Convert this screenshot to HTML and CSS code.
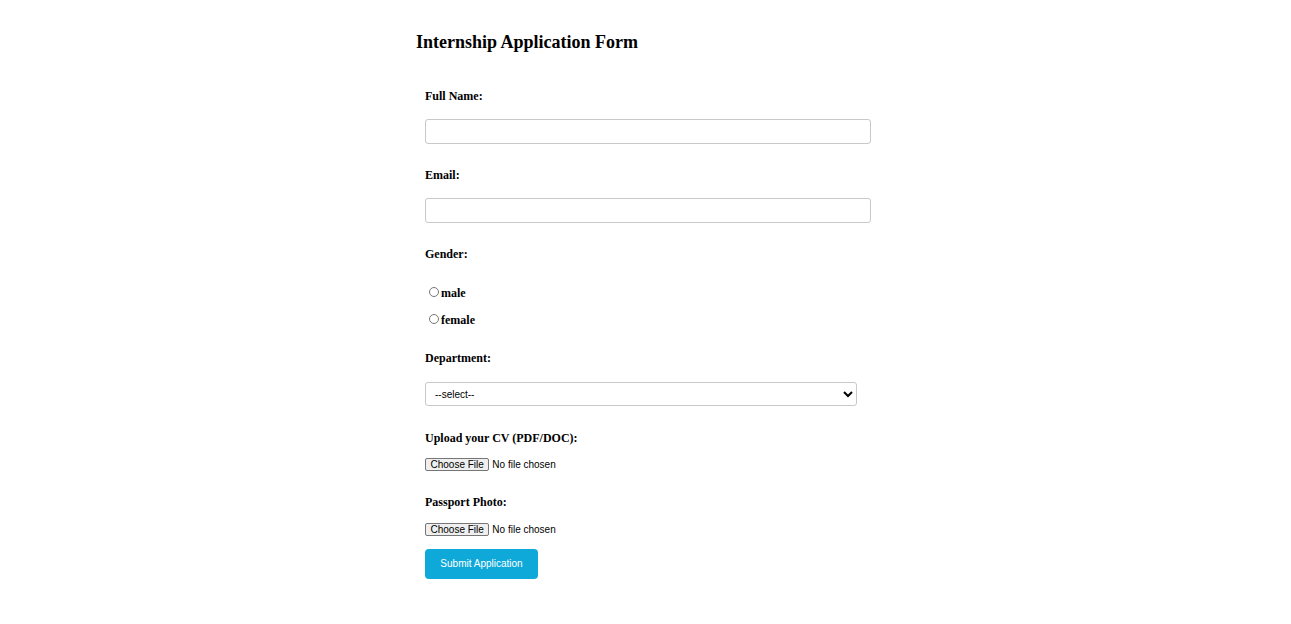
FILE: index.html
```html
<!DOCTYPE html>
<html lang="en">
<head>
<meta charset="utf-8">
<title>Internship Application Form</title>
<link rel="stylesheet" href="styles.css">
</head>
<body>
<div class="container">
  <h2 class="title">Internship Application Form</h2>
  <form class="form">
    <label class="label label-first" for="fullname">Full Name:</label>
    <input class="text-input" type="text" id="fullname">

    <label class="label" for="email">Email:</label>
    <input class="text-input" type="email" id="email">

    <span class="label">Gender:</span>
    <div class="radio-row radio-row-first">
      <input class="radio" type="radio" name="gender" id="male"><label class="radio-label" for="male">male</label>
    </div>
    <div class="radio-row">
      <input class="radio" type="radio" name="gender" id="female"><label class="radio-label" for="female">female</label>
    </div>

    <label class="label label-after-radio" for="dept">Department:</label>
    <select class="select" id="dept">
      <option>--select--</option>
      <option>Engineering</option>
      <option>Marketing</option>
      <option>Finance</option>
    </select>

    <label class="label label-after-select" for="cv">Upload your CV (PDF/DOC):</label>
    <input class="file-input" type="file" id="cv">

    <label class="label label-after-file" for="photo">Passport Photo:</label>
    <input class="file-input file-input-last" type="file" id="photo">

    <button class="submit" type="submit">Submit Application</button>
  </form>
</div>
</body>
</html>
```

FILE: styles.css
```css
html, body {
  margin: 0;
  padding: 0;
  background: #ffffff;
}

body {
  font-family: "Liberation Serif", "Times New Roman", serif;
  font-size: 12px;
  color: #000;
}

.container {
  width: 459px;
  margin: 0 auto;
  padding-top: 32px;
}

.title {
  margin: 0;
  font-size: 18px;
  font-weight: bold;
  line-height: normal;
}

.form {
  display: flex;
  flex-direction: column;
  align-items: flex-start;
  padding-left: 9px;
}

.label {
  display: block;
  font-weight: bold;
  line-height: normal;
  margin-top: 24px;
}

.label-first {
  margin-top: 36px;
}

.label-after-radio {
  margin-top: 23px;
}

.label-after-select {
  margin-top: 24.5px;
}

.label-after-file {
  margin-top: 24.3px;
}

.text-input {
  box-sizing: border-box;
  width: 446px;
  height: 25px;
  margin: 15px 0 0 0;
  border: 1px solid #c9c9c9;
  border-radius: 3px;
  padding: 0 6px;
  font-family: "Liberation Sans", Arial, sans-serif;
  font-size: 10px;
  background: #fff;
}

.radio-row {
  display: block;
  margin-top: 11px;
  line-height: normal;
}

.radio-row-first {
  margin-top: 22.8px;
}

.radio {
  width: 10px;
  height: 10px;
  margin: 2px 2px 0 4px;
}

.radio-label {
  font-weight: bold;
}

.select {
  box-sizing: border-box;
  width: 432px;
  height: 24px;
  margin-top: 16.7px;
  border: 1px solid #c9c9c9;
  border-radius: 3px;
  padding: 0 5px;
  font-family: "Liberation Sans", Arial, sans-serif;
  font-size: 10px;
  color: #000;
  background: #fff;
}

.file-input {
  margin-top: 11.7px;
  font-family: "Liberation Sans", Arial, sans-serif;
  font-size: 10px;
  color: #000;
}

.file-input::file-selector-button {
  font-family: "Liberation Sans", Arial, sans-serif;
  font-size: 10px;
  padding: 0 4.5px;
  margin-right: 3px;
  border: 1px solid #767676;
  border-radius: 2px;
  background: #efefef;
  color: #000;
}

.file-input-last {
  margin-top: 12.7px;
}

.submit {
  margin-top: 13.3px;
  width: 113px;
  height: 30px;
  border: none;
  border-radius: 4px;
  background: #0fa9d9;
  color: #fff;
  font-family: "Liberation Sans", Arial, sans-serif;
  font-size: 10px;
  padding: 0;
  cursor: pointer;
}
```
